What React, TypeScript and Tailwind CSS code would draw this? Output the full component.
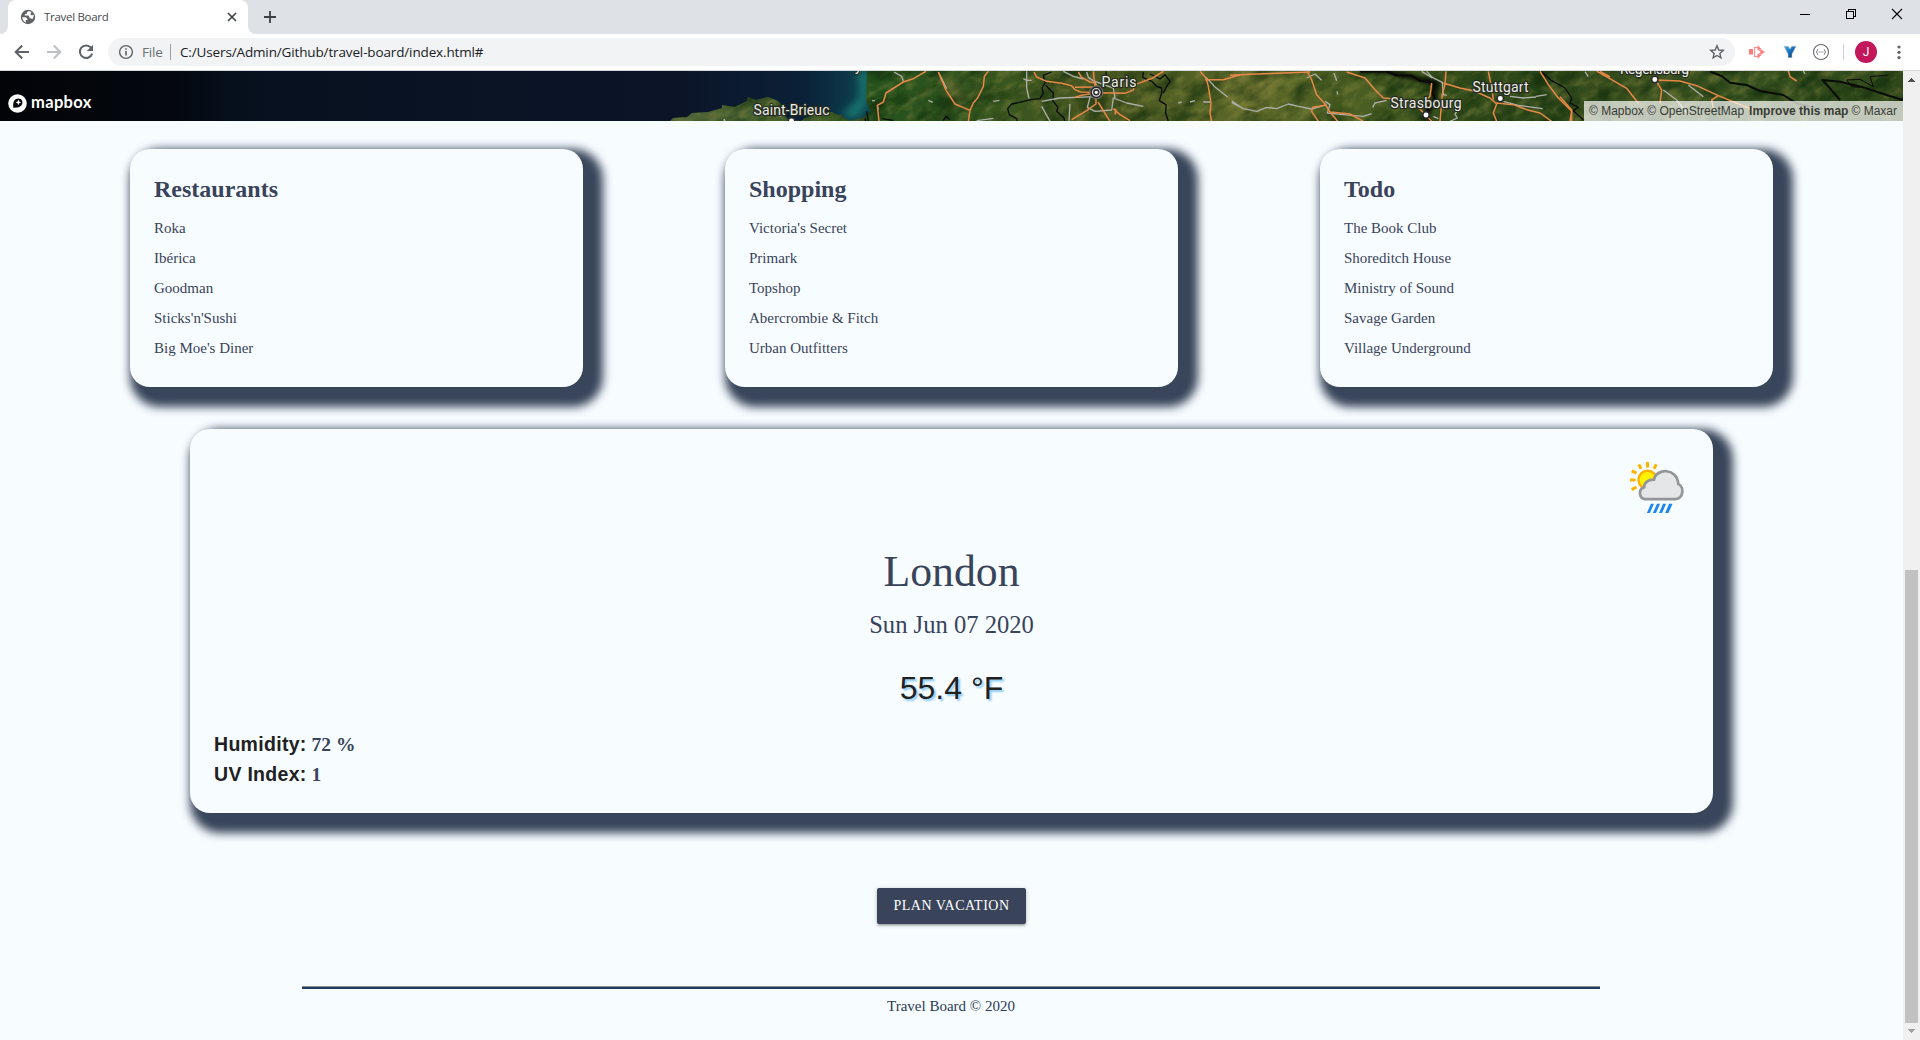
import React from "react";

const lists = [
  { title: "Restaurants", items: ["Roka", "Ibérica", "Goodman", "Sticks'n'Sushi", "Big Moe's Diner"] },
  { title: "Shopping", items: ["Victoria's Secret", "Primark", "Topshop", "Abercrombie & Fitch", "Urban Outfitters"] },
  { title: "Todo", items: ["The Book Club", "Shoreditch House", "Ministry of Sound", "Savage Garden", "Village Underground"] },
];

function TabStrip() {
  return (
    <div className="flex h-[34px] bg-[#dee1e6] pl-2">
      <div className="relative flex h-full w-[240px] items-center rounded-t-lg bg-white pl-3 pr-[11px]">
        <svg className="absolute -left-2 bottom-0" width="8" height="8"><path d="M8 0V8H0A8 8 0 0 0 8 0Z" fill="#fff" /></svg>
        <svg className="absolute -right-2 bottom-0" width="8" height="8"><path d="M0 0V8H8A8 8 0 0 1 0 0Z" fill="#fff" /></svg>
        <svg width="16" height="16" viewBox="0 0 16 16">
          <circle cx="8" cy="8" r="7.2" fill="#5f6368" />
          <path d="M8.2 2.2 6.8 3.6v1.5H5.2L4.6 6.6h3.9l1 1.3v1.4h1.6l1 .9c1.3-1.1 1.9-2.9 1.4-4.6l-1.6.9-1.3-.9.1-1.5 1-.9C10.600 2.400 9.400 2 8.200 2.200ZM2.200 8.300h3.700l1.500 1.600v1.200H5.800v1.800l.9.9C4 13.300 2.200 11 2.200 8.300Z" fill="#fff" />
        </svg>
        <span className="ml-2 flex-1 whitespace-nowrap text-[11.500px] tracking-[-0.300px] text-[#45494d]">Travel Board</span>
        <svg width="10" height="10" viewBox="0 0 10 10"><path d="M1 1 9 9M9 1 1 9" stroke="#3c4043" strokeWidth="1.600" /></svg>
      </div>
      <svg className="ml-4 mt-[11px]" width="12" height="12" viewBox="0 0 12 12"><path d="M6 0V12M0 6H12" stroke="#3c4043" strokeWidth="1.800" /></svg>
      <div className="ml-auto mr-[17px] mt-2 flex gap-[34px]">
        <svg width="12" height="12" viewBox="0 0 12 12" shapeRendering="crispEdges"><path d="M1 6.500H11" stroke="#000" /></svg>
        <svg width="12" height="12" viewBox="0 0 12 12" fill="none" stroke="#000" shapeRendering="crispEdges"><path d="M1.500 3.500h7v7h-7zM3.500 3.500v-2h7v7h-2" /></svg>
        <svg width="12" height="12" viewBox="0 0 12 12"><path d="M1 1 11 11M11 1 1 11" stroke="#000" strokeWidth="1.100" /></svg>
      </div>
    </div>
  );
}

function Toolbar() {
  return (
    <div className="flex h-[37px] items-start border-b border-[#d5d7da] bg-white pt-1">
      <div className="flex h-7 w-[108px] items-center gap-4 pl-[14px]">
        <svg width="16" height="16" viewBox="0 0 16 16" fill="none" stroke="#5f6368" strokeWidth="2"><path d="M15 8H2.400M8.200 1.500 1.700 8l6.500 6.500" /></svg>
        <svg width="16" height="16" viewBox="0 0 16 16" fill="none" stroke="#bdc0c3" strokeWidth="2"><path d="M1 8H13.600M7.800 1.500 14.300 8l-6.500 6.500" /></svg>
        <svg width="16" height="16" viewBox="0 0 16 16"><path d="M13 3.600A6.300 6.300 0 1 0 14.200 9.600" fill="none" stroke="#5f6368" strokeWidth="2" /><path d="M15 .8V7H8.800Z" fill="#5f6368" /></svg>
      </div>
      <div className="flex h-7 w-[1627px] items-center rounded-full bg-[#f1f3f4] pl-[10px] pr-[10px]">
        <svg width="16" height="16" viewBox="0 0 16 16"><circle cx="8" cy="8" r="6.400" fill="none" stroke="#5f6368" strokeWidth="1.400" /><path d="M8 7v4.600M8 4.200V5.800" stroke="#5f6368" strokeWidth="1.600" /></svg>
        <span className="ml-2 w-[28px] text-[13.500px] tracking-[-0.200px] text-[#6b6f73]">File</span>
        <span className="h-4 w-px bg-[#9aa0a6]" />
        <span className="ml-[9px] whitespace-nowrap text-[13.500px] tracking-[-0.140px] text-[#202124]">C:/Users/Admin/Github/travel-board/index.html#</span>
        <svg className="ml-auto" width="16" height="16" viewBox="0 0 16 16"><path d="m8 1.800 1.750 4.200 4.550.4-3.450 3 1.050 4.450L8 11.500l-3.900 2.350L5.150 9.400 1.700 6.400l4.550-.4Z" fill="none" stroke="#5f6368" strokeWidth="1.400" /></svg>
      </div>
      <div className="flex h-7 flex-1 items-center pl-[13px]">
        <svg width="18" height="16" viewBox="0 0 18 16"><path d="M1 5h4v5.500H1z" fill="#ff7c7c" /><path d="M6.500 3v10M6 3.500h4.500M6 12.500h4.500M9.500 5l4.500 3-4.500 3" fill="none" stroke="#ff9191" strokeWidth="1.200" /><path d="M9.500 1.300v4l4.500.2ZM9.500 14.700v-4l4.500-.2ZM12.500 5.300v5.400L17 8z" fill="#ff7c7c" /></svg>
        <svg className="ml-[17px]" width="14" height="16" viewBox="0 0 14 16">
          <defs><linearGradient id="vee" x1="0" y1="0" x2="1" y2="1"><stop offset="0" stopColor="#49b5f0" /><stop offset=".5" stopColor="#156ab5" /><stop offset="1" stopColor="#0a2f68" /></linearGradient></defs>
          <path d="M.8 2.200h4.500L7 5 8.700 2.200h4.500L9 10v3.800H5V10Z" fill="url(#vee)" stroke="#c9c9c9" strokeWidth=".6" />
        </svg>
        <svg className="ml-[15px]" width="18" height="18" viewBox="0 0 18 18" fill="none" stroke="#66696d"><circle cx="9" cy="9" r="7.500" strokeWidth="1.100" /><path d="M6.200 6.200c-1.200 0-.4 2.400-1.900 2.800 1.500.4.7 2.800 1.900 2.800M11.800 6.200c1.200 0 .4 2.400 1.900 2.800-1.500.4-.7 2.800-1.900 2.800" /><path d="M6.700 9h1M8.500 9h1M10.300 9h1" /></svg>
        <span className="ml-[13px] h-4 w-px bg-[#cdd0d4]" />
        <span className="ml-[11px] flex h-[22px] w-[22px] items-center justify-center rounded-full bg-[#c2185b] font-[Roboto] text-[12px] text-white">J</span>
        <svg className="ml-[19px]" width="6" height="16" viewBox="0 0 6 16" fill="#5f6368"><circle cx="3" cy="3" r="1.600" /><circle cx="3" cy="8.300" r="1.600" /><circle cx="3" cy="13.600" r="1.600" /></svg>
      </div>
    </div>
  );
}

function MapStrip() {
  const orange = { fill: "none", stroke: "#e88848", strokeWidth: 4.500, strokeLinejoin: "round" as const };
  const gray = { fill: "none", stroke: "#aeb0aa", strokeWidth: 4, strokeLinejoin: "round" as const };
  const black = { fill: "none", stroke: "#090b06", strokeWidth: 4, strokeLinejoin: "round" as const };
  return (
    <div className="relative h-[50px] overflow-hidden bg-[#091120]">
      <svg className="block" width="1903" height="50" viewBox="0 71 1903 50">
        <defs>
          <linearGradient id="sea" x1="0" x2="867" y1="0" y2="0" gradientUnits="userSpaceOnUse">
            <stop offset="0" stopColor="#020408" /><stop offset=".2" stopColor="#04070e" /><stop offset=".27" stopColor="#06101d" /><stop offset=".5" stopColor="#0a1324" /><stop offset=".78" stopColor="#0c1427" /><stop offset=".93" stopColor="#0a2138" /><stop offset="1" stopColor="#0e4350" />
          </linearGradient>
          <linearGradient id="land" x1="640" x2="1903" y1="0" y2="0" gradientUnits="userSpaceOnUse">
            <stop offset="0" stopColor="#52653a" /><stop offset=".15" stopColor="#3c5a28" /><stop offset=".19" stopColor="#24511c" /><stop offset=".25" stopColor="#31551f" /><stop offset=".36" stopColor="#475620" /><stop offset=".48" stopColor="#5a6728" /><stop offset=".58" stopColor="#485d22" /><stop offset=".66" stopColor="#304a1a" /><stop offset=".72" stopColor="#2a4518" /><stop offset=".78" stopColor="#3d5220" /><stop offset=".88" stopColor="#35501f" /><stop offset="1" stopColor="#31491b" />
          </linearGradient>
          <filter id="terrain" x="0" y="0" width="100%" height="100%" colorInterpolationFilters="sRGB">
            <feTurbulence type="fractalNoise" baseFrequency=".07 .12" numOctaves="5" seed="8" />
            <feColorMatrix values="0 0 0 0 .55  0 0 0 0 .55  0 0 0 0 .27  3 0 0 0 -1.300" />
            <feComposite in2="SourceGraphic" operator="in" />
          </filter>
          <filter id="shade" x="0" y="0" width="100%" height="100%" colorInterpolationFilters="sRGB">
            <feTurbulence type="fractalNoise" baseFrequency=".03 .06" numOctaves="6" seed="3" />
            <feColorMatrix values="0 0 0 0 .05  0 0 0 0 .16  0 0 0 0 .04  3 0 0 0 -1.300" />
            <feComposite in2="SourceGraphic" operator="in" />
          </filter>
          <filter id="soft" x="-50%" y="-50%" width="200%" height="200%"><feGaussianBlur stdDeviation="4" /></filter>
          <clipPath id="coast"><path d="M670 121 673 118 687 117 692 113 708 112 722 108 722 105 735 107 747 101 748 97 756 100 768 97 778 101 784 107 782 113 789 120 801 121 805 118 820 112 832 112 850 121H670ZM867 71H1903V121H835L840 114 848 121 862 118 870 112 866 100Z" /></clipPath>
        </defs>
        <rect y="71" width="900" height="50" fill="url(#sea)" />
        <path d="M869 71 867 100 858 117H840L860 98 859 71Z" fill="#1c8a78" opacity=".8" filter="url(#soft)" />
        <g clipPath="url(#coast)">
          <rect x="640" y="71" width="1263" height="50" fill="url(#land)" />
          <path d="m938 74 14 6 12 18-6 7-14-20Z" fill="#85783a" opacity=".7" filter="url(#soft)" />
          <path d="M1225 71h65l-30 40-35-4Z" fill="#8a873c" opacity=".6" filter="url(#soft)" />
          <g transform="rotate(-30 1271 96)">
            <rect x="600" y="-300" width="1350" height="800" filter="url(#terrain)" opacity=".38" />
            <rect x="600" y="-300" width="1350" height="800" filter="url(#shade)" opacity=".6" />
          </g>
        </g>
        <g transform="translate(640 66) scale(.408)">
          <path {...gray} d="M120 161 148 157 180 158 205 149 215 147 207 134 206 130M215 147 270 153 315 159 340 155 385 161M480 139 494 139 500 165M480 159 550 154 575 153M340 100 344 125" />
          <path {...black} d="M552 128 556 165" />
        </g>
        <g transform="translate(860 68) scale(.33333)">
          <path {...black} d="M20 130 25 160M65 152 100 157M250 157 258 145 270 155M575 12 550 22 555 45 546 60 550 75 540 92 512 95 475 104 455 108 443 122 448 140 470 152 472 160M557 52 580 76 578 98 594 118 590 130 612 150 614 160M850 12 848 28 875 40 890 55 905 60 905 75 898 98 918 110 917 135 925 160M870 18 900 33 915 20 930 40 920 55 910 75M738 10 740 35" />
          <path {...gray} d="M102 12 125 25 130 40M235 12 260 62M500 10 500 60 507 92M545 100 600 90 705 86M610 10 640 25 670 33M680 12 685 28 705 42 720 75M545 115 570 160M630 108 627 158M690 88 682 118 705 130 755 126 760 90 800 105 850 115M705 40 760 60 765 90M1038 28 1065 57 1103 87M1115 98 1140 116M350 158 400 151M205 97 218 103M400 100 418 97M955 105 965 102M990 102 1005 98M1030 102 1053 102M53 115 55 125M36 98 45 98M515 37 500 37 490 32" />
          <path {...orange} d="M198 10 160 32 130 42 78 75 70 102 52 112 57 160M235 12 245 36 257 65 270 85 285 108 330 127 325 160M385 10 373 25 370 55 353 90 340 105 330 127M522 12 530 27 560 40 605 46 635 53 645 65 662 72 695 73M655 12 665 28 690 42 705 45 720 72M700 10 705 60M645 58 700 57M645 88 665 82 710 74 795 76 820 66 825 50 878 30 910 10M708 85 708 108 680 128 635 155M714 102 750 160M760 122 780 140 810 158M765 140 768 123M1020 10 1038 30 1045 55 1053 105 1050 135 1055 160M1035 35 1090 35 1140 20" />
          <circle cx="709" cy="73" r="19" fill="none" stroke="#77736a" strokeWidth="4" />
        </g>
        <g transform="translate(1230 68) scale(.33333)">
          <path d="M390 5 470 10 620 45 612 100 580 155" fill="none" stroke="#030503" strokeWidth="18" opacity=".65" filter="url(#soft)" />
          <path {...black} strokeWidth="7" d="M390 10 435 10 470 10 500 22 545 23 570 38 615 45 608 75 615 94 595 115 590 145 605 160" />
          <path {...black} d="M935 12 965 38 1005 60 1025 90 1020 105 1045 118 1030 128 1060 155" />
          <path {...gray} d="M5 103 40 122 80 130 110 118 140 122 175 108 205 115 245 123 290 110M230 30 255 18 275 37M320 38 312 15M321 70 323 80M285 100 300 110 292 135 340 140 400 145 425 137M428 118 435 105 470 97M590 10 607 28 637 43 640 80 650 82M575 10 607 30M610 145 625 152M660 160 682 150 675 138 685 125 675 105M840 85 880 90 918 87M820 100 865 112 938 122M918 85 950 80" />
          <path {...orange} d="M0 22 80 18 240 12M232 10 245 36 260 80 285 108 300 132 360 138 400 160M300 132 323 160M285 112 248 118 245 130 265 160M350 12 405 30 435 65 460 90 545 97 605 160M648 10 645 48 637 80 630 160M640 45 690 60 735 70 780 90 800 108 790 135 800 160M775 10 785 60 790 95M605 45 600 85 580 105M800 105 850 110 890 125 930 135 965 160M930 10 955 50 985 90 1025 130 1020 160M1110 10 1140 27" />
        </g>
        <g transform="translate(1560 0) scale(.33333)">
          <path {...black} strokeWidth="6" d="M450 215 485 228 510 248 560 255 600 273 670 285 710 310 750 320M840 300 810 265 787 240 840 245 910 262 980 285 1028 300" />
          <path {...black} strokeWidth="3" d="M900 262 875 260 860 240 900 238 940 260 930 230 985 225" />
          <path {...orange} d="M110 213 165 245 200 265 235 310M285 240 360 243 410 257 475 287 580 330M290 245 305 270 300 310M475 287 455 300 460 325M0 290 35 330 35 363M685 213 690 230 710 243" />
          <path {...gray} d="M75 215 85 230M310 270 350 300 385 345M385 255 430 290M730 213 735 222" />
        </g>
        <g fontFamily="Roboto" fontSize="14" fill="#ecece8" stroke="#252b1d" strokeWidth="2.500" paintOrder="stroke" strokeLinejoin="round">
          <text x="753.500" y="114.500" textLength="76">Saint-Brieuc</text>
          <text x="1101.500" y="87" textLength="35">Paris</text>
          <text x="1390.500" y="108" textLength="71">Strasbourg</text>
          <text x="1472.500" y="92" textLength="56">Stuttgart</text>
          <text x="1620" y="73.500" textLength="69">Regensburg</text>
          <text x="855" y="70.500">y</text>
        </g>
        <g fill="#fff" stroke="#2b2c2b" strokeWidth="1.500">
          <circle cx="791.500" cy="121" r="3.200" /><circle cx="1426" cy="115" r="3.200" /><circle cx="1500.300" cy="98.500" r="3.200" /><circle cx="1654.800" cy="79.500" r="3.200" />
          <circle cx="1096.300" cy="92.300" r="4.500" fill="#30302c" stroke="#292a28" strokeWidth="3" />
          <circle cx="1096.300" cy="92.300" r="3.800" fill="none" stroke="#ddd" strokeWidth="1.200" /><circle cx="1096.300" cy="92.300" r="1.600" stroke="none" />
        </g>
      </svg>
      <div className="absolute bottom-2 left-2 flex h-[19px] items-center gap-1 text-white">
        <svg width="19" height="19" viewBox="0 0 19 19"><circle cx="9.500" cy="9.500" r="9.300" fill="#fff" /><path d="M5.300 13.700C4.700 9.500 5.600 6.400 8 5.100c2.300-1.300 5.100-.6 6.100 1.600 1 2.300 0 4.600-2 5.900-1.700 1-4.100 1.300-6.800 1.100Z" fill="#070b10" /><path d="m10.400 5.600.8 2 2 .8-2 .8-.8 2-.8-2-2-.8 2-.8Z" fill="#fff" /></svg>
        <span className="-mt-[3px] font-[Lato] text-[16.500px] font-bold leading-none tracking-[0.350px]">mapbox</span>
      </div>
      <div className="absolute bottom-0 right-0 flex h-5 w-[319px] items-center whitespace-nowrap bg-white/70 pl-[5px] font-['Liberation_Sans'] text-[12px] text-[#393b35]">
        <span>© Mapbox © OpenStreetMap</span><b className="ml-[5px]">Improve this map</b><span className="ml-[3px]">© Maxar</span>
      </div>
    </div>
  );
}

function WeatherIcon() {
  return (
    <svg className="absolute right-[29px] top-[33px]" width="54" height="52" viewBox="0 0 160 154">
      <path d="M52 0V16M26 7 33 20M78 7 71 20M5 26 19 33M0 53H16M5 82 19 74" stroke="#ffb300" strokeWidth="9" />
      <circle cx="52" cy="53" r="27" fill="#fff200" stroke="#ffb000" strokeWidth="7" />
      <path d="M46 110a18 18 0 0 1-4-35c0-16 14-24 29-23C78 17 140 17 143 65c19 8 15 45-8 45Z" fill="#e5e6e8" stroke="#939598" strokeWidth="8" />
      <path d="m50 151 12-27h9l-12 27zM68 151l12-27h9l-12 27zM86 151l12-27h9l-12 27zM104 151l12-27h10l-12 27z" fill="#1b87ee" />
    </svg>
  );
}

function Scrollbar() {
  return (
    <div className="flex w-[17px] flex-col items-center bg-[#f0f0f0]">
      <svg className="mt-[7px]" width="7" height="4" viewBox="0 0 7 4" shapeRendering="crispEdges"><path d="M0 4H7L3.500 0Z" fill="#505050" /></svg>
      <div className="mt-[488px] h-[453px] w-[13px] bg-[#c1c1c1]" />
      <svg className="mt-[6px]" width="7" height="4" viewBox="0 0 7 4" shapeRendering="crispEdges"><path d="M0 0H7L3.500 4Z" fill="#a0a0a0" /></svg>
    </div>
  );
}

export default function App() {
  return (
    <div className="flex h-[1040px] w-[1920px] flex-col overflow-hidden bg-[#f7fcff] font-['Open_Sans',sans-serif]">
      <TabStrip />
      <Toolbar />
      <div className="flex min-h-0 flex-1">
        <main className="w-[1903px] font-['Liberation_Serif',serif] text-[15px] text-[#39435a]">
          <MapStrip />
          <div className="mt-7 flex gap-[142px] pl-[130px]">
            {lists.map((l) => (
              <section key={l.title} className="h-[238px] w-[453px] rounded-[20px] bg-[#f7fcff] p-6 shadow-[10px_10px_10px_10px_#38455a]">
                <h2 className="mb-2 text-[24px] font-bold leading-8">{l.title}</h2>
                <ul className="leading-[30px]">{l.items.map((i) => <li key={i}>{i}</li>)}</ul>
              </section>
            ))}
          </div>
          <section className="relative ml-[190px] mt-[42px] flex h-[384px] w-[1523px] flex-col items-center rounded-[20px] bg-[#f7fcff] px-6 pt-[118px] shadow-[10px_10px_10px_10px_#38455a]">
            <WeatherIcon />
            <h3 className="text-[43.800px] leading-[48px]">London</h3>
            <p className="mt-4 text-[24.600px] leading-7">Sun Jun 07 2020</p>
            <p className="mt-[31px] font-['Liberation_Sans'] text-[32px] leading-9 text-[#212121] [text-shadow:2px_2px_2px_#8ccbf0]">55.4 °F</p>
            <div className="mt-[23px] self-stretch text-[19.500px] font-bold leading-[30px]">
              <p className="h-[30px]"><span className="font-['Liberation_Sans'] tracking-[0.300px] text-[#212121]">Humidity:</span> 72 %</p>
              <p className="h-[30px]"><span className="font-['Liberation_Sans'] tracking-[0.300px] text-[#212121]">UV Index:</span> 1</p>
            </div>
          </section>
          <div className="mt-[75px] flex justify-center">
            <button className="h-9 w-[149px] whitespace-nowrap rounded-[2px] bg-[#39435a] pb-px text-[14px] leading-[35px] tracking-[0.500px] text-white shadow-[0_2px_2px_0_rgba(0,0,0,.14),0_3px_1px_-2px_rgba(0,0,0,.12),0_1px_5px_0_rgba(0,0,0,.2)]">PLAN VACATION</button>
          </div>
          <footer className="ml-[302px] mt-[62px] w-[1298px] border-t border-[#8d9093] text-center text-[#2b3a55]">
            <div className="h-[2px] bg-[#223a60]" />
            <p className="mt-[6px] leading-[22px]">Travel Board © 2020</p>
          </footer>
        </main>
        <Scrollbar />
      </div>
    </div>
  );
}
